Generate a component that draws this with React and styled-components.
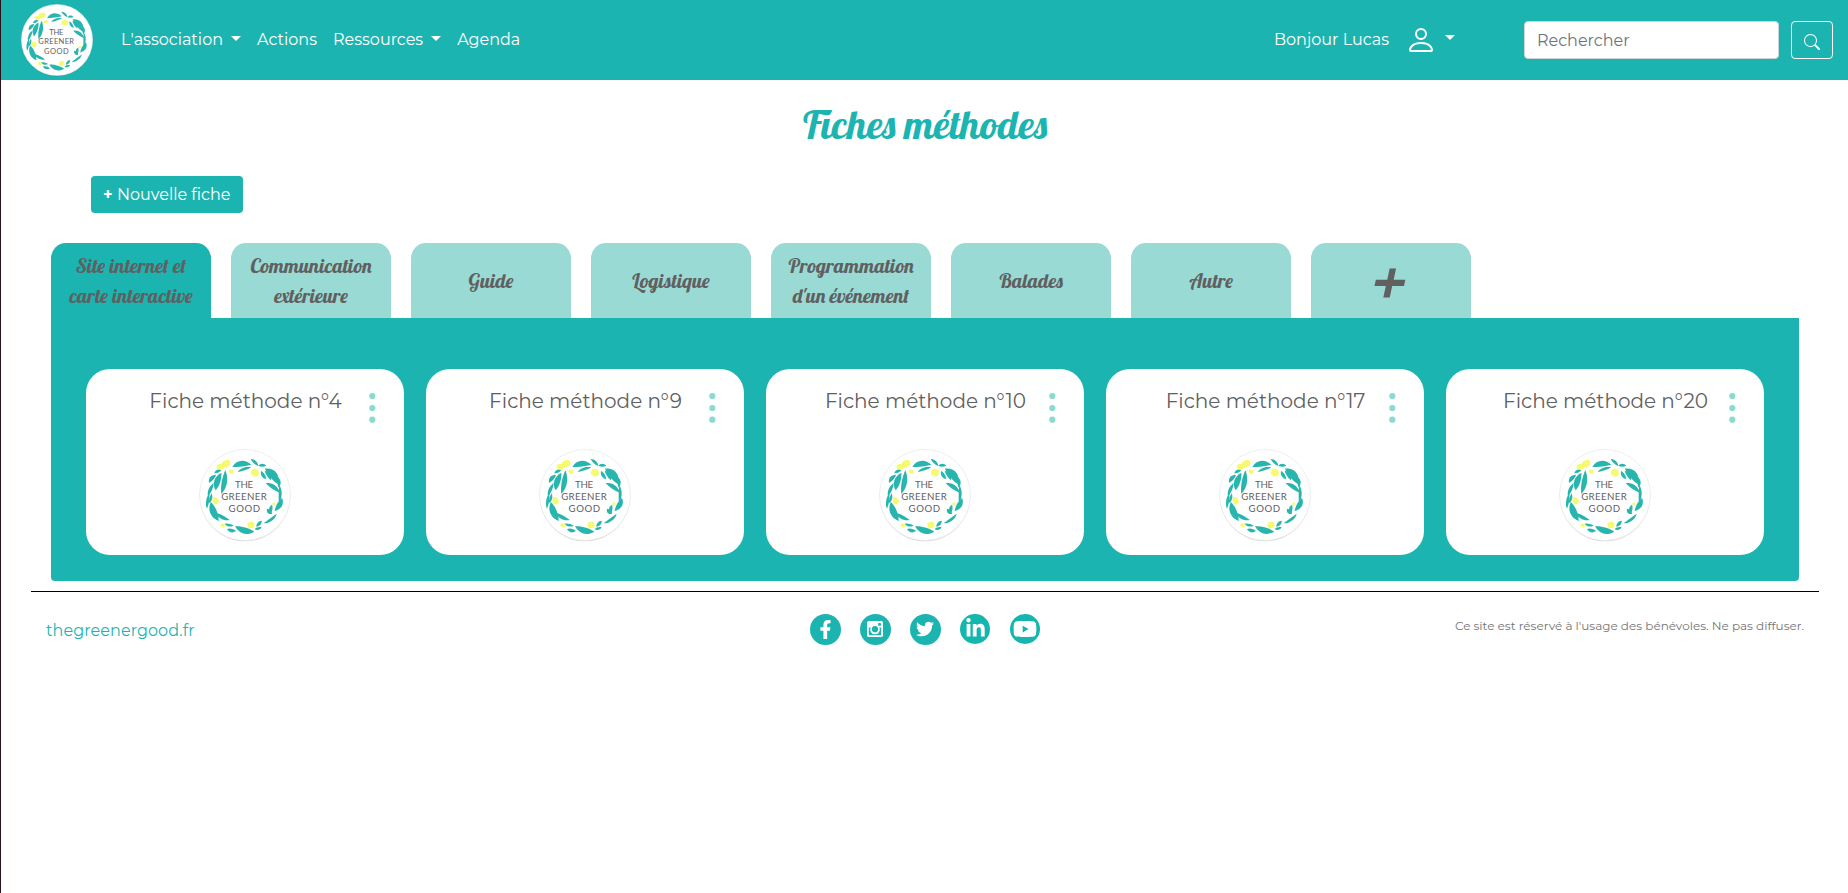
import React from "react";
import styled, { createGlobalStyle } from "styled-components";
import { FaFacebookF, FaTwitter, FaLinkedinIn, FaYoutube } from "react-icons/fa";

const teal = "#1cb4b0";
const paleTeal = "#9adad4";
const grey = "#606060";

const GlobalStyle = createGlobalStyle`
  *, *::before, *::after { box-sizing: border-box; }
  body {
    margin: 0;
    background: #fff;
    color: ${grey};
    font-family: Montserrat, Inter, "Open Sans", sans-serif;
    font-size: 16px;
    font-weight: 400;
    line-height: 24px;
  }
`;

const Page = styled.div`
  min-height: 100vh;
  border-left: 1px solid #2a1220;
`;

const Navbar = styled.header`
  display: flex;
  align-items: center;
  height: 80px;
  padding: 0 15px 0 20px;
  background: ${teal};
  color: #fff;
`;

const NavLinks = styled.nav`
  display: flex;
  gap: 16px;
  margin-left: 28px;
  padding-bottom: 1px;
`;

const NavLink = styled.a`
  display: flex;
  align-items: center;
  gap: 8px;
  color: #fff;
  white-space: nowrap;
`;

const Caret = styled.span`
  border: 5px solid transparent;
  border-top-color: #fff;
  border-bottom: 0;
  margin-bottom: ${(p) => p.$lift || 2}px;
`;

const UserMenu = styled.div`
  display: flex;
  align-items: center;
  margin-left: auto;
`;

const Greeting = styled.span`
  margin-right: 16px;
  padding-bottom: 1px;
`;

const UserIcon = styled.svg`
  width: 32px;
  height: 32px;
  margin-right: 8px;
`;

const SearchForm = styled.form`
  display: flex;
  gap: 12px;
  margin-left: 69px;
`;

const SearchInput = styled.input`
  width: 255px;
  height: 38px;
  padding: 1px 12px 0;
  border: 1px solid #ced4da;
  border-radius: 4px;
  background: #fff;
  font: inherit;
  &::placeholder { color: #6c757d; opacity: 1; }
`;

const SearchButton = styled.button`
  display: flex;
  align-items: center;
  justify-content: center;
  width: 42px;
  height: 38px;
  padding: 4px 0 0;
  border: 1px solid #fff;
  border-radius: 4px;
  background: transparent;
  color: #fff;
`;

const LogoSvg = styled.svg`
  display: block;
  width: ${(p) => p.$size}px;
  height: ${(p) => p.$size}px;
  overflow: visible;
`;

const Title = styled.h1`
  margin: 20px 0 28px;
  padding-left: 1px;
  color: ${teal};
  font: 500 40px/48px Lobster, "Liberation Serif", serif;
  text-align: center;
`;

const NewButton = styled.button`
  display: flex;
  align-items: center;
  gap: 5px;
  width: 152px;
  height: 37px;
  margin-left: 90px;
  padding: 0 0 0 12px;
  border: 0;
  border-radius: 4px;
  background: ${teal};
  color: #fff;
  font: inherit;
  font-variant-ligatures: none;
  white-space: nowrap;
`;

const Plus = styled.span`
  width: 9px;
  font-weight: 700;
`;

const Board = styled.main`
  margin: 30px 49px 10px 50px;
`;

const Tabs = styled.div`
  display: flex;
  gap: 20px;
`;

const Tab = styled.div`
  display: flex;
  flex-direction: column;
  align-items: center;
  justify-content: center;
  width: 160px;
  height: 75px;
  border-radius: 15px 15px 0 0;
  background: ${(p) => (p.$active ? teal : paleTeal)};
  color: ${grey};
  font: 400 20px/30px Lobster, "Liberation Serif", serif;
`;

const TabLine = styled.span`
  white-space: nowrap;
`;

const AddTab = styled(Tab)`
  font-size: 80px;
  line-height: 75px;
`;

const Panel = styled.section`
  display: flex;
  gap: 22px;
  height: 263px;
  padding: 51px 35px 0;
  border-radius: 0 0 4px 4px;
  background: ${teal};
`;

const Card = styled.article`
  display: grid;
  grid-template-columns: 36px 1fr 48px;
  grid-template-rows: 80px 92px;
  width: 318px;
  height: 186px;
  border-radius: 24px;
  background: #fff;
`;

const CardTitle = styled.h2`
  grid-column: 2;
  margin: 17px 0 0 13px;
  font-size: 20px;
  font-weight: 400;
  line-height: 30px;
  text-align: center;
  white-space: nowrap;
`;

const Dots = styled.svg`
  width: 8px;
  height: 32px;
  margin: 23px 0 0 12px;
`;

const CardLogo = styled.div`
  grid-column: 1 / -1;
  justify-self: center;
`;

const Footer = styled.footer`
  display: grid;
  grid-template-columns: 1fr auto 1fr;
  margin: 0 29px 0 30px;
  padding: 21px 15px 0;
  border-top: 1px solid #000;
`;

const SiteLink = styled.a`
  padding-top: 6px;
  color: ${teal};
  letter-spacing: 0.08px;
`;

const Socials = styled.div`
  display: grid;
  grid-template-columns: repeat(5, 50px);
  justify-items: center;
  align-items: center;
  height: 32px;
`;

const SocialCircle = styled.a`
  display: flex;
  align-items: center;
  justify-content: center;
  width: ${(p) => p.$size}px;
  height: ${(p) => p.$size}px;
  padding-bottom: ${(p) => p.$lift || 0}px;
  border-radius: 50%;
  background: ${(p) => p.$color || teal};
  color: #fff;
`;

const Notice = styled.small`
  padding-top: 1px;
  color: #757575;
  font-size: 12px;
  text-align: right;
  white-space: nowrap;
`;

/* Each leaf: start point, end point, thickness, sideways bend of its spine. */
const leaves = [
  [127, 81, 184, 74, 15, -9], [143, 96, 184, 82, 8, -3], [182, 57, 205, 78, 8, -2],
  [205, 77, 229, 77, 8, -2], [225, 86, 265, 133, 20, -9], [213, 93, 229, 118, 9, 2],
  [224, 92, 243, 121, 9, -3], [262, 111, 266, 143, 9, -4], [227, 130, 269, 158, 12, -5],
  [268, 136, 267, 190, 8, -4], [276, 174, 254, 213, 14, -5], [231, 206, 246, 222, 10, 2],
  [246, 194, 243, 220, 9, 3], [260, 221, 221, 250, 8, -5], [215, 242, 199, 260, 9, 0],
  [194, 268, 215, 262, 7, 1], [135, 259, 193, 275, 17, 6], [111, 267, 138, 273, 10, 2],
  [104, 251, 131, 257, 7, 2], [77, 218, 119, 240, 10, 4], [62, 186, 86, 243, 18, 5],
  [51, 206, 58, 160, 8, -2], [54, 169, 71, 129, 9, -2], [57, 128, 78, 104, 11, -3],
  [73, 100, 94, 90, 8, -2], [77, 151, 94, 98, 16, -5], [94, 162, 106, 91, 14, 4],
  [57, 190, 65, 160, 7, 2],
];

const lemons = [
  [91, 80, 11, 8, 0], [108, 71, 14, 10, -25], [123, 95, 8, 6, 10], [195, 98, 12, 11, 25],
  [77, 182, 9, 11, -15], [252, 192, 5, 5, 0], [183, 255, 11, 10, -25], [98, 256, 7, 6, 20],
];

function leafPath([x1, y1, x2, y2, width, bend]) {
  const dx = x2 - x1;
  const dy = y2 - y1;
  const len = Math.hypot(dx, dy);
  const nx = -dy / len;
  const ny = dx / len;
  const at = (t, off) => `${(x1 + dx * t + nx * off).toFixed(1)} ${(y1 + dy * t + ny * off).toFixed(1)}`;
  const a = bend + width * 0.75;
  const b = bend - width * 0.75;
  return `M${x1} ${y1}C${at(0.3, a)} ${at(0.7, a)} ${x2} ${y2}C${at(0.7, b)} ${at(0.25, b)} ${x1} ${y1}Z`;
}

function Logo({ size }) {
  return (
    <LogoSvg $size={size} viewBox="27 27 276 276">
      <circle cx="165" cy="168" r="136" fill="#000" opacity="0.15" />
      <circle cx="165" cy="165" r="136.500" fill="#fff" stroke="#e6e6e6" strokeWidth="2" />
      {leaves.map((leaf, i) => (
        <path key={i} d={leafPath(leaf)} fill="#27b5ae" />
      ))}
      {lemons.map(([cx, cy, rx, ry, turn], i) => (
        <ellipse key={i} cx={cx} cy={cy} rx={rx} ry={ry} transform={`rotate(${turn} ${cx} ${cy})`} fill="#f6fa6c" />
      ))}
      <g fill="#606060" fontFamily="Lato, sans-serif" fontSize="29" fontWeight="400" textAnchor="middle">
        <text x="162" y="144" textLength="54">THE</text>
        <text x="162" y="180" textLength="137">GREENER</text>
        <text x="163" y="217" textLength="95">GOOD</text>
      </g>
    </LogoSvg>
  );
}

function Instagram() {
  return (
    <svg width="16" height="16" viewBox="0 0 16 16">
      <rect width="16" height="16" rx="1.8" fill="#fff" />
      <path d="M1.8 6.6V13.2a1 1 0 0 0 1 1H13.2a1 1 0 0 0 1-1V6.6H12.4a4.8 4.8 0 1 1-8.8 0Z" fill={teal} />
      <circle cx="8" cy="8.2" r="3.1" fill={teal} />
      <rect x="11.2" y="2" width="2.8" height="2.8" rx="0.4" fill={teal} />
    </svg>
  );
}

const tabs = [
  { lines: ["Site internet et", "carte interactive"], active: true },
  { lines: ["Communication", "extérieure"] },
  { lines: ["Guide"] },
  { lines: ["Logistique"] },
  { lines: ["Programmation", "d'un événement"] },
  { lines: ["Balades"] },
  { lines: ["Autre"] },
];

const cards = [4, 9, 10, 17, 20];

export default function App() {
  return (
    <Page>
      <GlobalStyle />
      <Navbar>
        <Logo size={72} />
        <NavLinks>
          <NavLink>L'association<Caret /></NavLink>
          <NavLink>Actions</NavLink>
          <NavLink>Ressources<Caret /></NavLink>
          <NavLink>Agenda</NavLink>
        </NavLinks>
        <UserMenu>
          <Greeting>Bonjour Lucas</Greeting>
          <UserIcon viewBox="0 0 16 16" fill="#fff">
            <path d="M8 8a3 3 0 1 0 0-6 3 3 0 0 0 0 6zm2-3a2 2 0 1 1-4 0 2 2 0 0 1 4 0zm4 8c0 1-1 1-1 1H3s-1 0-1-1 1-4 6-4 6 3 6 4zm-1-.004c-.001-.246-.154-.986-.832-1.664C11.516 10.68 10.289 10 8 10c-2.29 0-3.516.68-4.168 1.332-.678.678-.83 1.418-.832 1.664h10z" />
          </UserIcon>
          <Caret $lift={5} />
        </UserMenu>
        <SearchForm>
          <SearchInput placeholder="Rechercher" />
          <SearchButton type="button" aria-label="Rechercher">
            <svg width="16" height="16" viewBox="0 0 16 16" fill="currentColor">
              <path d="M11.742 10.344a6.500 6.500 0 1 0-1.397 1.398h-.001c.03.04.062.078.098.115l3.850 3.850a1 1 0 0 0 1.415-1.414l-3.850-3.850a1.007 1.007 0 0 0-.115-.1zM12 6.500a5.500 5.500 0 1 1-11 0 5.500 5.500 0 0 1 11 0z" />
            </svg>
          </SearchButton>
        </SearchForm>
      </Navbar>

      <Title>Fiches méthodes</Title>
      <NewButton><Plus>+</Plus>Nouvelle fiche</NewButton>

      <Board>
        <Tabs>
          {tabs.map((tab) => (
            <Tab key={tab.lines[0]} $active={tab.active}>
              {tab.lines.map((text) => (
                <TabLine key={text}>{text}</TabLine>
              ))}
            </Tab>
          ))}
          <AddTab>+</AddTab>
        </Tabs>
        <Panel>
          {cards.map((n) => (
            <Card key={n}>
              <CardTitle>Fiche méthode n°{n}</CardTitle>
              <Dots viewBox="0 0 8 32" fill="#8adad4">
                <circle cx="4.300" cy="4" r="3.1" />
                <circle cx="4.300" cy="16" r="3.1" />
                <circle cx="4.300" cy="27.700" r="3.1" />
              </Dots>
              <CardLogo><Logo size={92} /></CardLogo>
            </Card>
          ))}
        </Panel>
      </Board>

      <Footer>
        <SiteLink>thegreenergood.fr</SiteLink>
        <Socials>
          <SocialCircle $size={31}><FaFacebookF size={19} /></SocialCircle>
          <SocialCircle $size={31}><Instagram /></SocialCircle>
          <SocialCircle $size={31}><FaTwitter size={18} /></SocialCircle>
          <SocialCircle $size={30} $lift={2} $color="#14b6ae"><FaLinkedinIn size={21} /></SocialCircle>
          <SocialCircle $size={30} $color="#14b6ae"><FaYoutube size={24} /></SocialCircle>
        </Socials>
        <Notice>Ce site est réservé à l'usage des bénévoles. Ne pas diffuser.</Notice>
      </Footer>
    </Page>
  );
}
